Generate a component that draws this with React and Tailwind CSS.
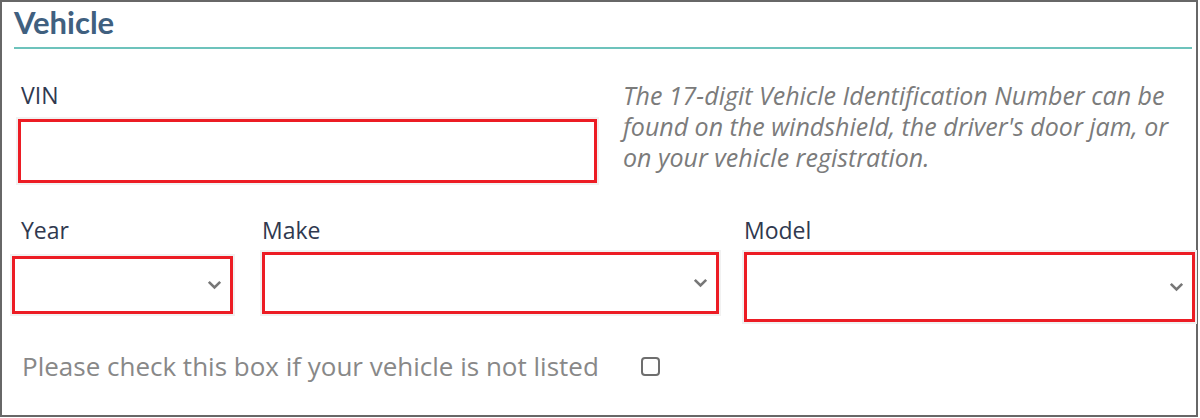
import React from "react";

const Chevron = () => (
  <svg width="15" height="10" viewBox="0 0 15 10" className="shrink-0">
    <path d="M1.8 1.8 L7.5 7.5 L13.2 1.8" fill="none" stroke="#777777" strokeWidth="2.6" />
  </svg>
);

const SelectBox = ({ className }) => (
  <div
    className={`flex items-center justify-end border-[3px] border-[#ec1c24] bg-white pr-2 shadow-[0_0_0_2px_#f1f1f1] ${className}`}
  >
    <Chevron />
  </div>
);

const App = () => {
  return (
    <div className="w-[1200px] h-[418px] bg-white font-['Open_Sans',sans-serif]">
      <div className="w-[1198px] h-[417px] border-2 border-[#676767] pl-3 pr-1">
        <h2 className="pt-[2px] pb-[6px] border-b-2 border-[#6dc3bc] text-[31px] leading-[37px] font-bold text-[#40607f] font-['Lato',sans-serif]">
          Vehicle
        </h2>

        <div className="flex mt-[32px]">
          <div className="w-[590px] shrink-0">
            <label className="block pl-[7px] text-[23px] leading-[28px] text-[#30394f]">VIN</label>
            <div className="mt-[10px] ml-[4px] w-[579px] h-[64px] border-[3px] border-[#ec1c24] shadow-[0_0_0_2px_#f1f1f1]" />
          </div>
          <p className="ml-[19px] -mt-[1px] w-[560px] text-[25px] leading-[31px] italic text-[#7b7b7b]">
            The 17-digit Vehicle Identification Number can be found on the windshield, the driver's door jam, or on your
            vehicle registration.
          </p>
        </div>

        <div className="flex items-start mt-[33px]">
          <div className="w-[248px] shrink-0">
            <label className="block pl-[7px] text-[23px] leading-[28px] text-[#30394f]">Year</label>
            <SelectBox className="mt-[12px] -ml-[2px] w-[221px] h-[58px]" />
          </div>
          <div className="w-[482px] shrink-0">
            <label className="block pl-0 text-[23px] leading-[28px] text-[#30394f]">Make</label>
            <SelectBox className="mt-[8px] w-[457px] h-[62px]" />
          </div>
          <div className="flex-1">
            <label className="block pl-0 text-[23px] leading-[28px] text-[#30394f]">Model</label>
            <SelectBox className="mt-[8px] w-[451px] h-[70px]" />
          </div>
        </div>

        <div className="flex items-center mt-[27px] pl-[8px]">
          <span className="text-[26px] leading-[34px] text-[#888888]">
            Please check this box if your vehicle is not listed
          </span>
          <span className="ml-[42px] w-[19px] h-[19px] rounded-[4px] border-2 border-[#6e6e6e] bg-white" />
        </div>
      </div>
    </div>
  );
};

export default App;
